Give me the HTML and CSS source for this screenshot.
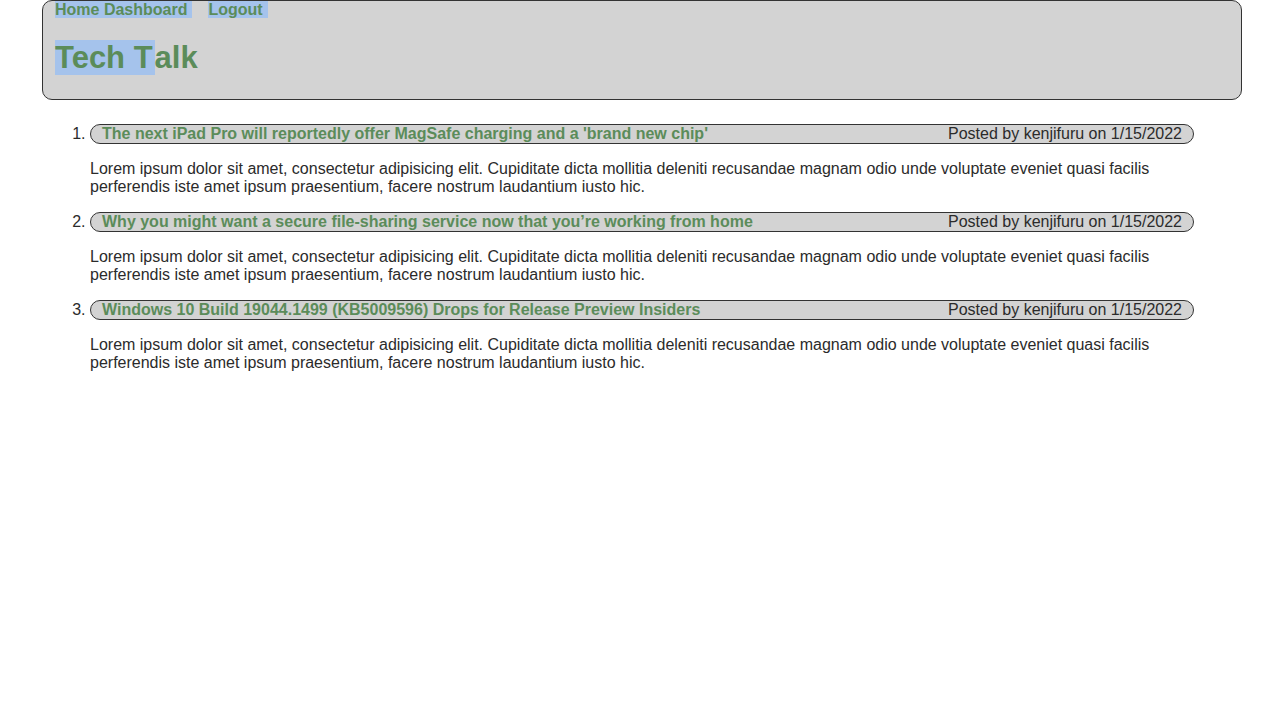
FILE: index.html
```html
<!DOCTYPE html>
<html>
<head>
<meta charset="utf-8">
<title>Tech Talk</title>
<link rel="stylesheet" href="styles.css">
</head>
<body>
<header class="site-header">
  <nav class="nav">
    <a class="nav-link" href="#"><span class="sel sel-home">Home Dashboard</span></a>
    <a class="nav-link" href="#"><span class="sel sel-logout">Logout</span></a>
  </nav>
  <h1 class="title"><span class="sel sel-title">Tech T</span>alk</h1>
</header>
<ol class="posts">
  <li class="post">
    <div class="post-bar">
      <a class="post-title" href="#">The next iPad Pro will reportedly offer MagSafe charging and a 'brand new chip'</a>
      <span class="post-meta">Posted by kenjifuru on 1/15/2022</span>
    </div>
    <p class="post-body">Lorem ipsum dolor sit amet, consectetur adipisicing elit. Cupiditate dicta mollitia deleniti recusandae magnam odio unde voluptate eveniet quasi facilis perferendis iste amet ipsum praesentium, facere nostrum laudantium iusto hic.</p>
  </li>
  <li class="post">
    <div class="post-bar">
      <a class="post-title" href="#">Why you might want a secure file-sharing service now that you’re working from home</a>
      <span class="post-meta">Posted by kenjifuru on 1/15/2022</span>
    </div>
    <p class="post-body">Lorem ipsum dolor sit amet, consectetur adipisicing elit. Cupiditate dicta mollitia deleniti recusandae magnam odio unde voluptate eveniet quasi facilis perferendis iste amet ipsum praesentium, facere nostrum laudantium iusto hic.</p>
  </li>
  <li class="post">
    <div class="post-bar">
      <a class="post-title" href="#">Windows 10 Build 19044.1499 (KB5009596) Drops for Release Preview Insiders</a>
      <span class="post-meta">Posted by kenjifuru on 1/15/2022</span>
    </div>
    <p class="post-body">Lorem ipsum dolor sit amet, consectetur adipisicing elit. Cupiditate dicta mollitia deleniti recusandae magnam odio unde voluptate eveniet quasi facilis perferendis iste amet ipsum praesentium, facere nostrum laudantium iusto hic.</p>
  </li>
</ol>
</body>
</html>
```
FILE: styles.css
```css
html, body {
  margin: 0;
  padding: 0;
  background: #ffffff;
}
body {
  font-family: "Liberation Sans", Arial, sans-serif;
  color: #2b2b2b;
  font-size: 16px;
  line-height: 18px;
  padding-left: 42px;
}
.site-header {
  width: 1200px;
  box-sizing: border-box;
  height: 100px;
  background: #d3d3d3;
  border: 1px solid #333333;
  border-radius: 10px;
  padding: 0 12px;
}
.nav {
  display: flex;
  gap: 16px;
  height: 18px;
}
.nav-link {
  color: #5b8c5a;
  font-weight: bold;
  text-decoration: none;
}
.sel {
  background: #a5c3ec;
}
.sel-home {
  padding-right: 5px;
}
.sel-logout {
  padding-right: 5px;
}
.sel-title {
  padding-right: 2px;
}
.title {
  margin: 21px 0 0 0;
  font-size: 31px;
  line-height: 36px;
  color: #5b8c5a;
  font-weight: bold;
}
.posts {
  width: 1104px;
  margin: 24px 0 0 48px;
  padding: 0;
}
.post-bar {
  display: flex;
  justify-content: space-between;
  align-items: center;
  height: 20px;
  box-sizing: border-box;
  background: #d3d3d3;
  border: 1px solid #333333;
  border-radius: 10px;
  padding: 0 11px;
}
.post-title {
  color: #5b8c5a;
  font-weight: bold;
  font-size: 16px;
  text-decoration: none;
}
.post-meta {
  color: #2b2b2b;
}
.post-body {
  margin: 16px 0;
}
```
